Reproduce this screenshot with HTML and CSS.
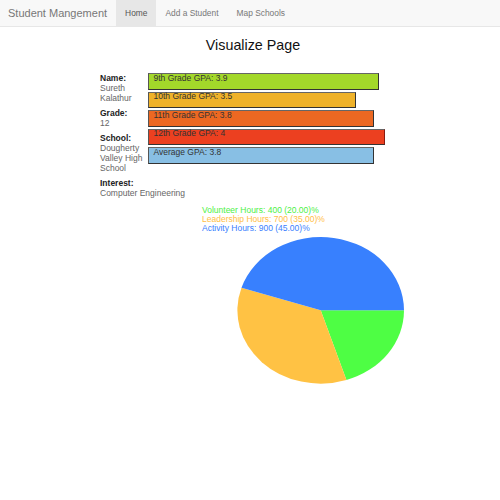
FILE: index.html
```html
<!DOCTYPE html>
<html>
<head>
<meta charset="utf-8">
<title>Visualize Page</title>
<link rel="stylesheet" href="styles.css">
</head>
<body>
<nav class="navbar">
  <span class="brand">Student Mangement</span>
  <ul class="nav">
    <li class="nav-item active">Home</li>
    <li class="nav-item">Add a Student</li>
    <li class="nav-item">Map Schools</li>
  </ul>
</nav>
<h1 class="title">Visualize Page</h1>
<main class="main">
  <div class="row">
    <div class="info">
      <div class="field"><div class="label">Name:</div><div class="value">Sureth Kalathur</div></div>
      <div class="field"><div class="label">Grade:</div><div class="value">12</div></div>
      <div class="field"><div class="label">School:</div><div class="value">Dougherty Valley High School</div></div>
    </div>
    <div class="bars">
      <div class="bar bar-9" style="width:231px"><span class="bar-label">9th Grade GPA: 3.9</span></div>
      <div class="bar bar-10" style="width:207.5px"><span class="bar-label">10th Grade GPA: 3.5</span></div>
      <div class="bar bar-11" style="width:225.5px"><span class="bar-label">11th Grade GPA: 3.8</span></div>
      <div class="bar bar-12" style="width:237px"><span class="bar-label">12th Grade GPA: 4</span></div>
      <div class="bar bar-avg" style="width:225.5px"><span class="bar-label">Average GPA: 3.8</span></div>
    </div>
  </div>
  <div class="field interest"><div class="label">Interest:</div><div class="value">Computer Engineering</div></div>
  <div class="legend">
    <div class="legend-item green">Volunteer Hours: 400 (20.00)%</div>
    <div class="legend-item yellow">Leadership Hours: 700 (35.00)%</div>
    <div class="legend-item blue">Activity Hours: 900 (45.00)%</div>
  </div>
  <svg class="pie" width="172" height="156" viewBox="0 0 172 156">
    <path class="slice-green" d="M84.7,77.3 L168,77.3 A83.3,73.3 0 0 1 110.44,147.01 Z"/>
    <path class="slice-yellow" d="M84.7,77.3 L110.44,147.01 A83.3,73.3 0 0 1 5.48,54.65 Z"/>
    <path class="slice-blue" d="M84.7,77.3 L5.48,54.65 A83.3,73.3 0 0 1 168,77.3 Z"/>
  </svg>
</main>
</body>
</html>
```
FILE: styles.css
```css
* { box-sizing: border-box; }
body {
  margin: 0;
  font-family: "Liberation Sans", Arial, sans-serif;
  color: #333;
  background: #fff;
}
.navbar {
  display: flex;
  align-items: stretch;
  height: 27px;
  background: #f8f8f8;
  border-bottom: 1px solid #e7e7e7;
}
.brand {
  padding: 0 9px 0 8px;
  font-size: 11px;
  line-height: 26px;
  color: #777;
}
.nav {
  display: flex;
  margin: 0;
  padding: 0;
  list-style: none;
}
.nav-item {
  padding: 0 9px;
  font-size: 8.4px;
  line-height: 26px;
  color: #777;
}
.nav-item.active {
  background: #e7e7e7;
  color: #555;
}
.title {
  margin: 10px 0 0 0;
  padding-left: 6px;
  text-align: center;
  font-size: 14.3px;
  font-weight: normal;
  line-height: 17px;
  color: #111;
}
.main {
  margin: 19px 0 0 100px;
  font-size: 8.5px;
}
.row {
  display: flex;
  gap: 2px;
}
.info {
  width: 46px;
  flex: none;
  margin-top: -0.5px;
}
.field {
  margin-bottom: 5px;
  line-height: 10px;
}
.label {
  font-weight: bold;
  color: #222;
}
.value {
  color: #666;
}
.bars {
  display: flex;
  flex-direction: column;
  gap: 2px;
  padding-top: 0;
}
.bar {
  height: 16.6px;
  border: 1.5px solid #333;
  border-top-color: #666;
  border-left-color: #555;
  padding-left: 4.5px;
  color: #333;
  white-space: nowrap;
}
.bar-label {
  display: block;
  line-height: 8px;
  margin-top: -0.5px;
}
.bar-9 { background: #a3d82a; }
.bar-10 { background: #efb22a; }
.bar-11 { background: #ec6822; }
.bar-12 { background: #ec4020; border-right-color: #8a1a10; }
.bar-avg { background: #88bfe4; }
.legend {
  margin: 8px 0 0 102px;
  line-height: 9px;
}
.green { color: #4cf044; }
.yellow { color: #ffbe44; }
.blue { color: #3a80fe; }
.pie {
  display: block;
  margin-left: 136px;
  margin-top: 0;
}
.slice-green { fill: #4efe44; }
.slice-yellow { fill: #ffc244; }
.slice-blue { fill: #3880fe; }
```
